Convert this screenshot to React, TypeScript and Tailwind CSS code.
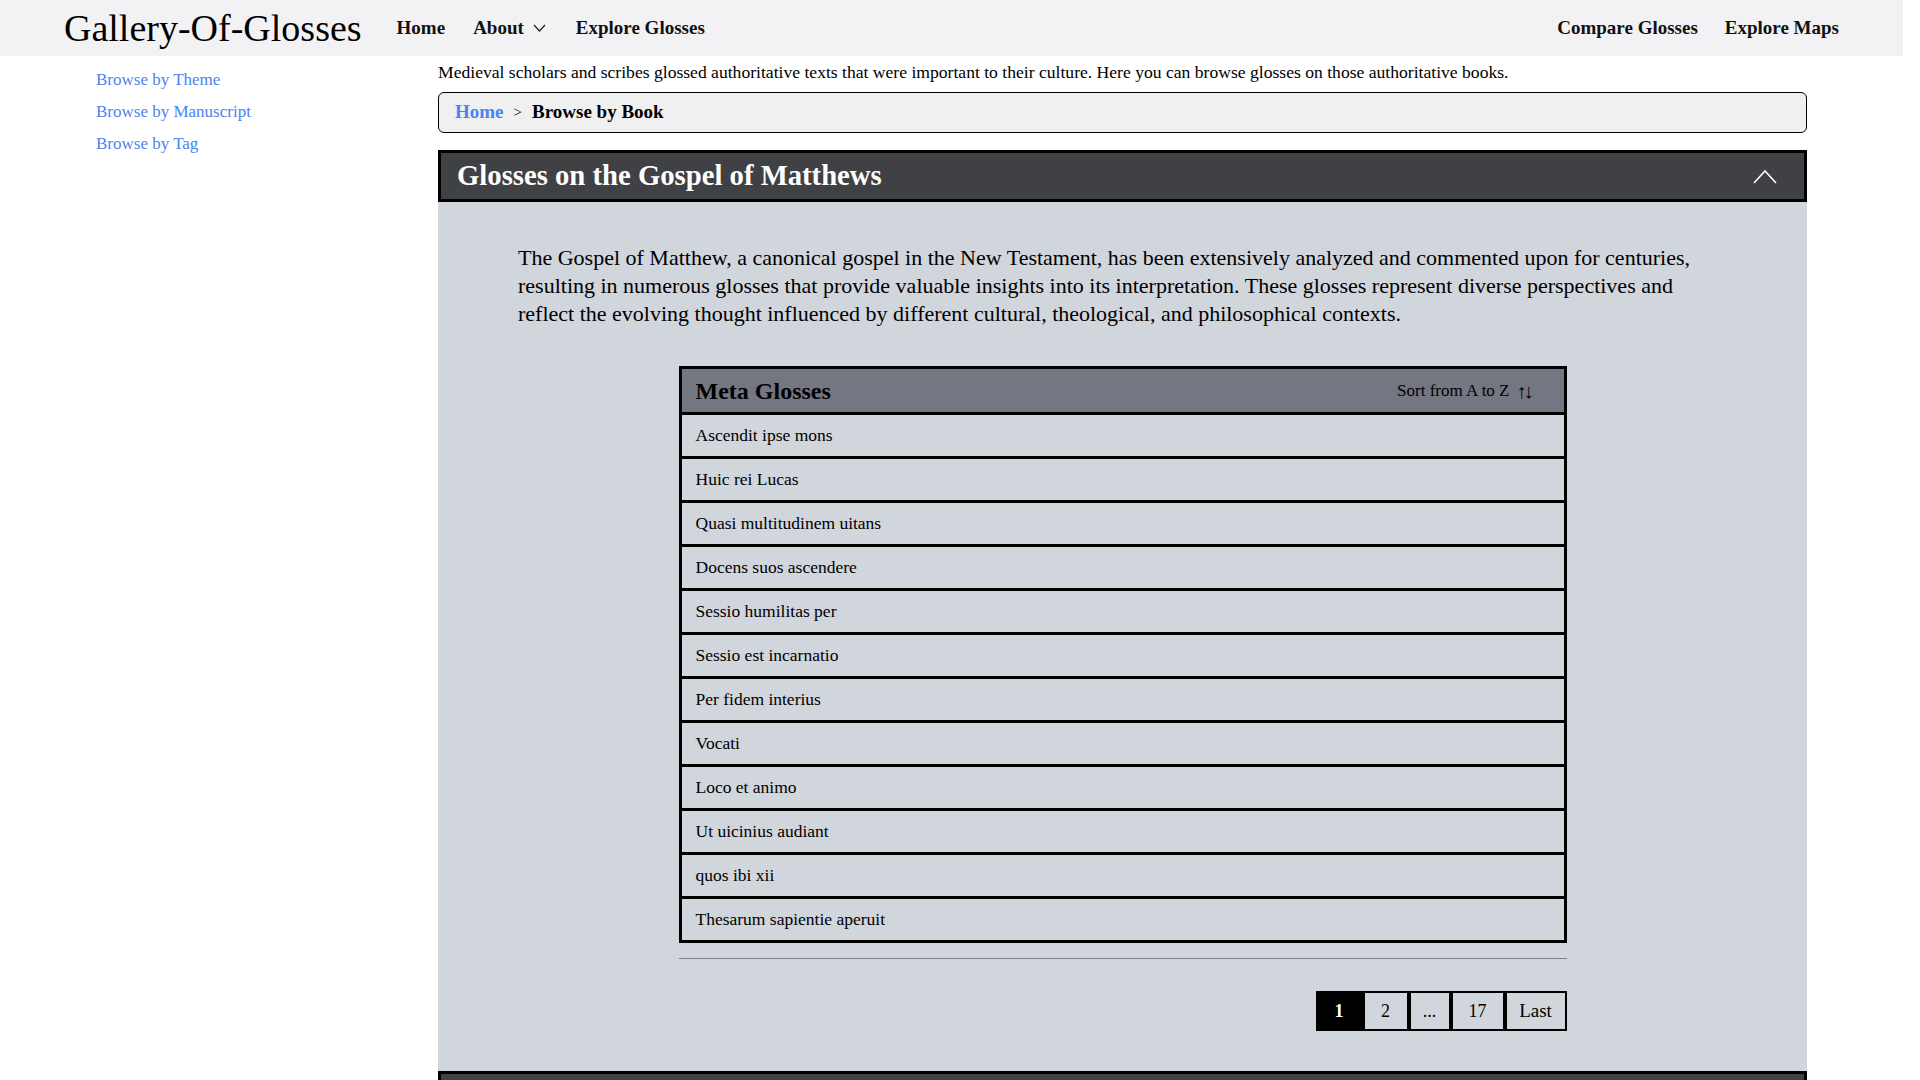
import React from 'react';

const glosses = [
  'Ascendit ipse mons',
  'Huic rei Lucas',
  'Quasi multitudinem uitans',
  'Docens suos ascendere',
  'Sessio humilitas per',
  'Sessio est incarnatio',
  'Per fidem interius',
  'Vocati',
  'Loco et animo',
  'Ut uicinius audiant',
  'quos ibi xii',
  'Thesarum sapientie aperuit',
];

const otherBooks = [
  'Glosses on the Gospel of Mark',
  'Glosses on the Gospel of Luke',
  'Glosses on the Gospel of John',
  'Glosses on the Psalms',
  'Glosses on the Epistles of Paul',
];

const ChevronUp = () => (
  <svg width="24" height="15" viewBox="0 0 24 15" fill="none">
    <polyline points="1,14 12,2 23,14" stroke="white" strokeWidth="1.6" />
  </svg>
);

const ChevronDown = () => (
  <svg width="13" height="8" viewBox="0 0 13 8" fill="none">
    <polyline points="1,1 6.5,7 12,1" stroke="#222" strokeWidth="1.2" />
  </svg>
);

const App = () => {
  return (
    <div className="min-h-screen bg-white text-black font-['Liberation_Serif',serif]">
      <div className="mr-[17px]">
        <header className="h-[56px] bg-[#f2f2f4] flex items-center justify-between pl-16 pr-16">
          <div className="flex items-center">
            <a href="#" className="text-[38px] leading-none text-black">
              Gallery-Of-Glosses
            </a>
            <nav className="flex items-center ml-[35px] text-[19px] font-bold text-[#111]">
              <a href="#">Home</a>
              <button className="flex items-center ml-7 font-bold">
                About
                <span className="ml-[9px]">
                  <ChevronDown />
                </span>
              </button>
              <a href="#" className="ml-[30px]">
                Explore Glosses
              </a>
            </nav>
          </div>
          <nav className="flex items-center gap-[27px] text-[19px] font-bold text-[#111]">
            <a href="#">Compare Glosses</a>
            <a href="#">Explore Maps</a>
          </nav>
        </header>

        <div className="flex">
          <aside className="w-[438px] shrink-0 pl-24 pt-2">
            <ul className="text-[17px] text-[#4a84ee]">
              <li className="h-8 flex items-center">
                <a href="#">Browse by Theme</a>
              </li>
              <li className="h-8 flex items-center">
                <a href="#">Browse by Manuscript</a>
              </li>
              <li className="h-8 flex items-center">
                <a href="#">Browse by Tag</a>
              </li>
            </ul>
          </aside>

          <main className="w-[1369px] shrink-0 pt-1 pb-24">
            <p className="text-[17.6px] leading-6">
              Medieval scholars and scribes glossed authoritative texts that were important to their culture. Here you can browse glosses on those authoritative books.
            </p>

            <div className="mt-2 h-[41px] border border-black rounded-md bg-[#f0f0f0] flex items-center pl-4 gap-2.5">
              <a href="#" className="text-[19px] font-bold text-[#4a84ee]">
                Home
              </a>
              <span className="text-[15px]">&gt;</span>
              <span className="text-[19px] font-bold">Browse by Book</span>
            </div>

            <section className="mt-[17px]">
              <div className="h-[52px] border-[3px] border-black bg-[#404145] flex items-center justify-between pl-4 pr-[27px]">
                <h2 className="text-[28.7px] font-bold text-white">Glosses on the Gospel of Matthews</h2>
                <ChevronUp />
              </div>
              <div className="bg-[#d1d5dc] pt-[42px] pb-10 px-20">
                <p className="text-[22px] leading-7">
                  The Gospel of Matthew, a canonical gospel in the New Testament, has been extensively analyzed and commented upon for centuries, resulting in numerous glosses that provide valuable insights into its interpretation. These glosses represent diverse perspectives and reflect the evolving thought influenced by different cultural, theological, and philosophical contexts.
                </p>

                <div className="w-[888px] mx-auto mt-[38px]">
                  <div className="border-[3px] border-black">
                    <div className="h-[43px] bg-[#747681] flex items-center justify-between pl-[14px] pr-[33px] border-b-[3px] border-black box-content">
                      <span className="text-[24px] font-bold">Meta Glosses</span>
                      <button className="text-[17px] flex items-center gap-[7px]">
                        Sort from A to Z <span className="text-[20px] leading-none tracking-[-3px]">↑↓</span>
                      </button>
                    </div>
                    {glosses.map((g, i) => (
                      <div
                        key={g}
                        className={`h-[41px] flex items-center pl-[14px] text-[17.5px] ${i < glosses.length - 1 ? 'border-b-[3px] border-black box-content' : ''}`}
                      >
                        {g}
                      </div>
                    ))}
                  </div>
                  <div className="mt-[15px] h-px bg-[#808088]" />
                  <div className="mt-8 flex justify-end">
                    <button className="w-[47px] h-[40px] border-2 border-black bg-black text-white font-bold text-[18px]">1</button>
                    <button className="w-[46px] h-[40px] border-2 border-black text-[18px]">2</button>
                    <button className="w-[42px] h-[40px] border-2 border-black text-[18px]">...</button>
                    <button className="w-[54px] h-[40px] border-2 border-black text-[18px]">17</button>
                    <button className="w-[62px] h-[40px] border-2 border-black text-[19px]">Last</button>
                  </div>
                </div>
              </div>
            </section>

            {otherBooks.map((b) => (
              <section key={b}>
                <div className="h-[52px] border-[3px] border-black bg-[#404145] flex items-center justify-between pl-4 pr-[27px]">
                  <h2 className="text-[28.7px] font-bold text-white">{b}</h2>
                  <span className="rotate-180">
                    <ChevronUp />
                  </span>
                </div>
              </section>
            ))}
          </main>
        </div>
      </div>
    </div>
  );
};

export default App;
